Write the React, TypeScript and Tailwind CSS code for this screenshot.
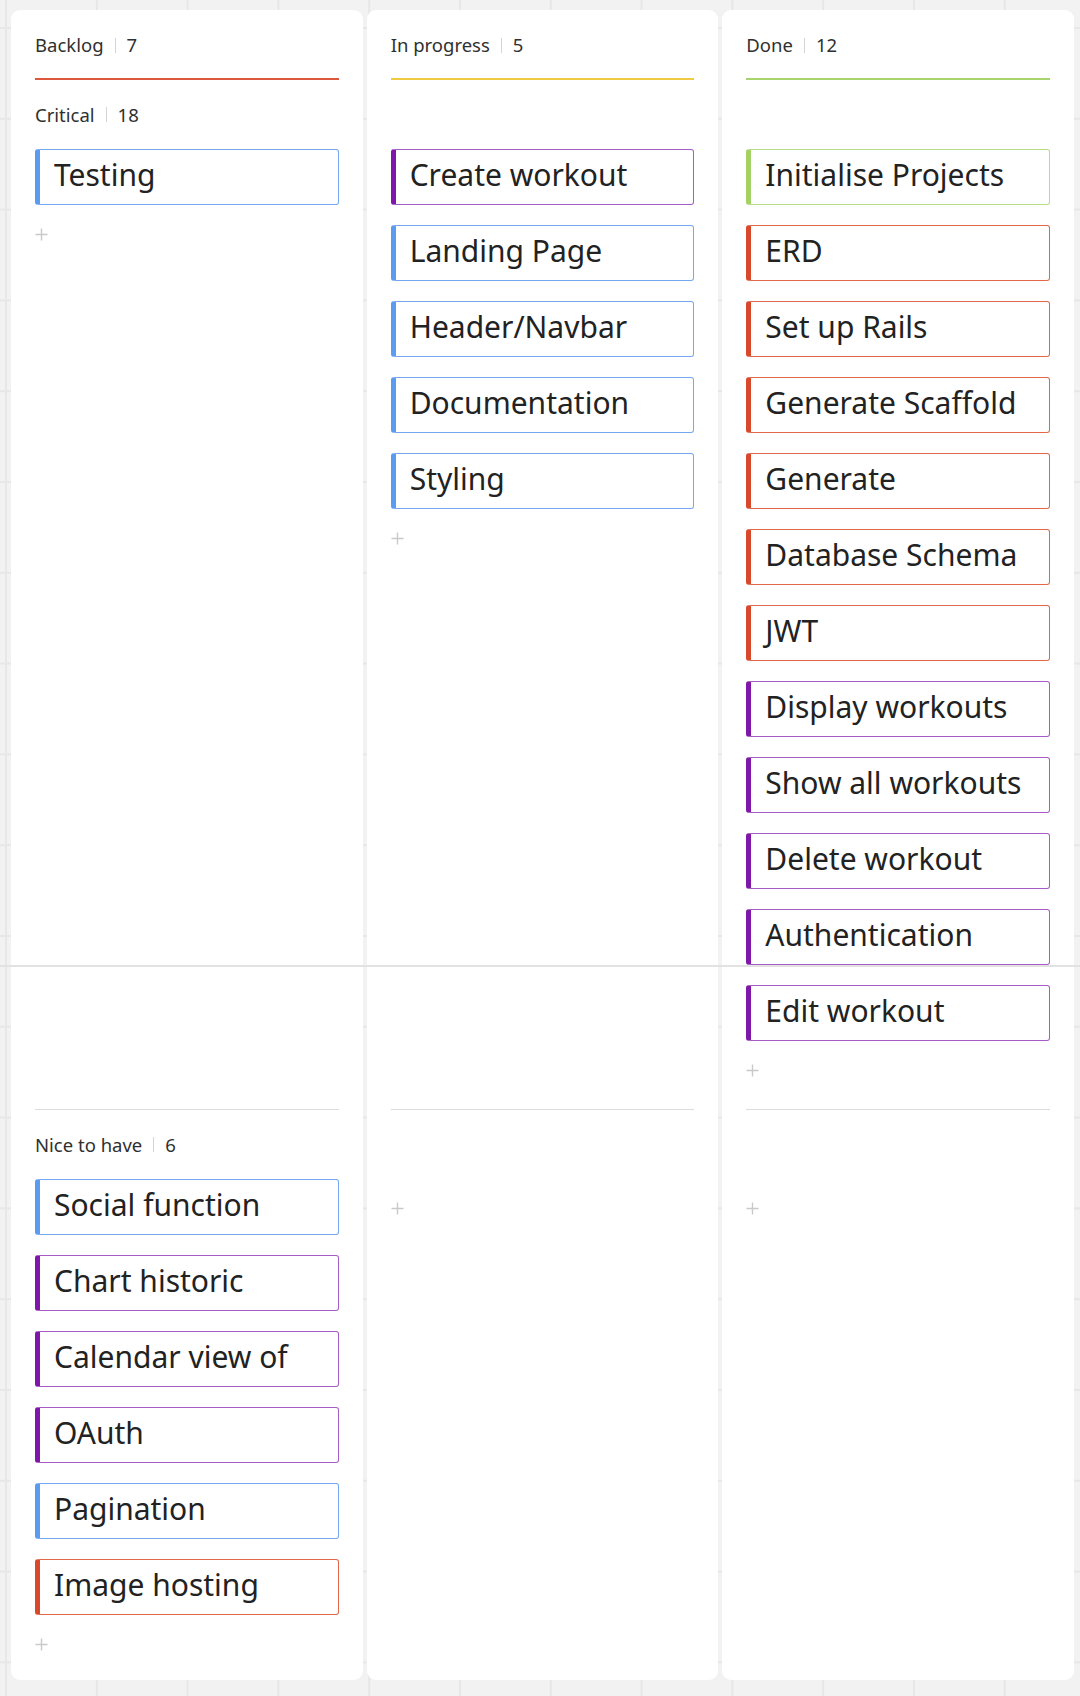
import React from 'react'

type Tone = 'blue' | 'purple' | 'red' | 'green'

interface Card {
  title: string
  tone: Tone
}

interface Column {
  name: string
  count: number
  lineColor: string
  lanes: Card[][]
}

const toneClasses: Record<Tone, string> = {
  blue: 'border-[#74a9f2] border-l-[#5b9bf0]',
  purple: 'border-[#a65cc6] border-l-[#7f17a8]',
  red: 'border-[#e3664a] border-l-[#d8482a]',
  green: 'border-[#b6dc85] border-l-[#a3d163]',
}

const lanes = [
  { name: 'Critical', count: 18 },
  { name: 'Nice to have', count: 6 },
]

const columns: Column[] = [
  {
    name: 'Backlog',
    count: 7,
    lineColor: 'bg-[#dc573d]',
    lanes: [
      [{ title: 'Testing', tone: 'blue' }],
      [
        { title: 'Social function', tone: 'blue' },
        { title: 'Chart historic', tone: 'purple' },
        { title: 'Calendar view of', tone: 'purple' },
        { title: 'OAuth', tone: 'purple' },
        { title: 'Pagination', tone: 'blue' },
        { title: 'Image hosting', tone: 'red' },
      ],
    ],
  },
  {
    name: 'In progress',
    count: 5,
    lineColor: 'bg-[#efcb44]',
    lanes: [
      [
        { title: 'Create workout', tone: 'purple' },
        { title: 'Landing Page', tone: 'blue' },
        { title: 'Header/Navbar', tone: 'blue' },
        { title: 'Documentation', tone: 'blue' },
        { title: 'Styling', tone: 'blue' },
      ],
      [],
    ],
  },
  {
    name: 'Done',
    count: 12,
    lineColor: 'bg-[#a7d46c]',
    lanes: [
      [
        { title: 'Initialise Projects', tone: 'green' },
        { title: 'ERD', tone: 'red' },
        { title: 'Set up Rails', tone: 'red' },
        { title: 'Generate Scaffold', tone: 'red' },
        { title: 'Generate', tone: 'red' },
        { title: 'Database Schema', tone: 'red' },
        { title: 'JWT', tone: 'red' },
        { title: 'Display workouts', tone: 'purple' },
        { title: 'Show all workouts', tone: 'purple' },
        { title: 'Delete workout', tone: 'purple' },
        { title: 'Authentication', tone: 'purple' },
        { title: 'Edit workout', tone: 'purple' },
      ],
      [],
    ],
  },
]

function Label({ name, count }: { name: string; count: number }) {
  return (
    <div className="flex items-center text-[18.5px] leading-[26px] text-[#303030]">
      <span>{name}</span>
      <span className="mx-[11px] h-[15px] w-px bg-[#d4d4d4]" />
      <span>{count}</span>
    </div>
  )
}

function Plus() {
  return (
    <div className="mt-[19px] flex h-[20px] items-center">
      <svg width="13" height="13" viewBox="0 0 13 13" className="text-[#c9c9c9]">
        <path d="M6.5 0.5v12M0.5 6.5h12" stroke="currentColor" strokeWidth="1.4" fill="none" />
      </svg>
    </div>
  )
}

function TaskCard({ card }: { card: Card }) {
  return (
    <div
      className={`flex h-[56px] items-center rounded-[3px] border border-l-[5px] bg-white pl-[14px] text-[30px] leading-none text-[#222] ${toneClasses[card.tone]}`}
    >
      <span className="-mt-[5px] whitespace-nowrap">{card.title}</span>
    </div>
  )
}

export default function App() {
  return (
    <div
      className="relative min-h-[1696px] w-[1080px] bg-[#f2f2f2] bg-[linear-gradient(to_right,#e7e7e7_2px,transparent_2px),linear-gradient(to_bottom,#e7e7e7_2px,transparent_2px)] bg-[size:90.8px_90.8px] bg-[position:5px_27px] pl-[11px] pt-[10px]"
      style={{ fontFamily: '"Noto Sans", "Open Sans", sans-serif' }}
    >
      <div className="grid w-[1063px] grid-cols-3 gap-x-[4px]">
        {columns.map((col) => (
          <div key={col.name} className="rounded-t-[9px] bg-white px-6 pt-[22px]">
            <Label name={col.name} count={col.count} />
            <div className={`mt-[20px] h-[2px] ${col.lineColor}`} />
          </div>
        ))}

        {lanes.map((lane, li) =>
          columns.map((col, ci) => (
            <div
              key={`${lane.name}-${col.name}`}
              className={`flex flex-col bg-white px-6 ${li === lanes.length - 1 ? 'rounded-b-[9px] pb-[26px]' : ''}`}
            >
              <div className="flex h-[69px] items-center">
                {ci === 0 && <Label name={lane.name} count={lane.count} />}
              </div>
              <div className="flex flex-col gap-[20px]">
                {col.lanes[li].map((card) => (
                  <TaskCard key={card.title} card={card} />
                ))}
              </div>
              <Plus />
              {li < lanes.length - 1 && (
                <>
                  <div className="min-h-[29px] flex-1" />
                  <div className="h-px bg-[#dcdcdc]" />
                </>
              )}
            </div>
          ))
        )}
      </div>

      {/* seam across the board */}
      <div className="absolute left-0 right-0 top-[965px] h-[2px] bg-[#e2e2e2]" />
    </div>
  )
}
